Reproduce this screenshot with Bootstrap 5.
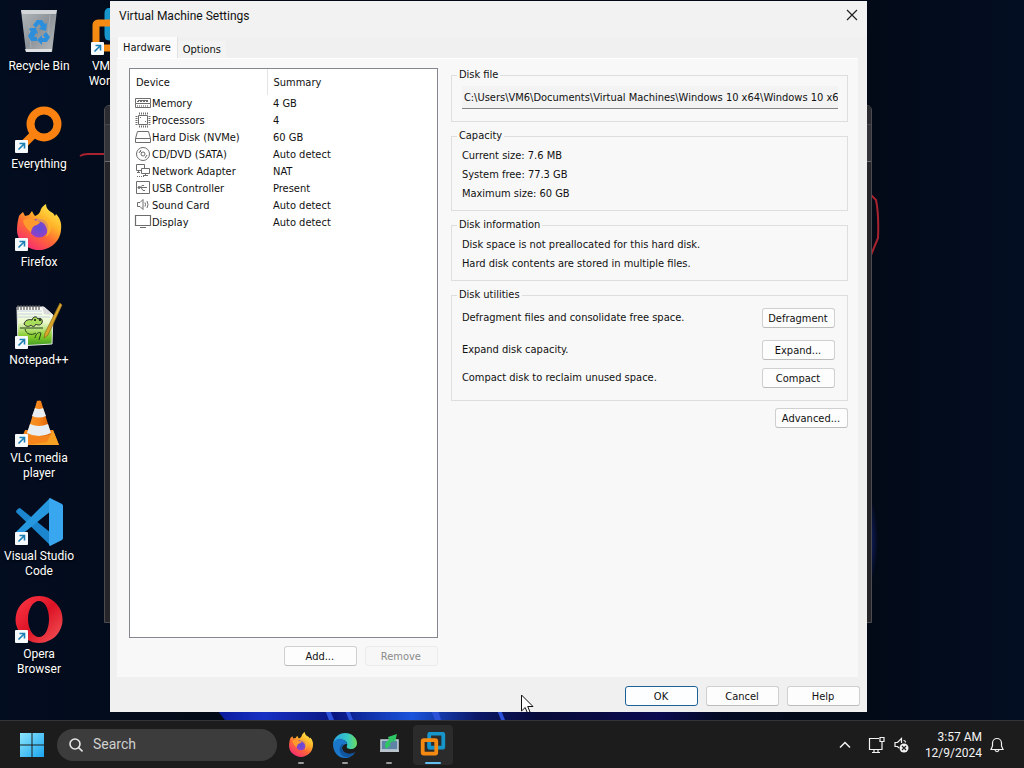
<!DOCTYPE html>
<html lang="en">
<head>
<meta charset="utf-8">
<meta name="viewport" content="width=device-width, initial-scale=1">
<title>Virtual Machine Settings</title>
<link href="https://cdn.jsdelivr.net/npm/bootstrap@5.3.0/dist/css/bootstrap.min.css" rel="stylesheet">
<style>
  :root { --shell: Roboto, "Noto Sans", sans-serif; --dlg: "DejaVu Sans Condensed", "DejaVu Sans", sans-serif; }
  body { font-family: var(--shell); font-size: 12px; line-height: 15px; background: #020a17; color: #fff; }
  button { color: inherit; }

  /* desktop */
  .desktop { background: radial-gradient(ellipse 14px 50px at 864px 540px, #1a2c9c, transparent), linear-gradient(90deg, #030d20, #020a17 20%, #020a17 85%, #030e22); }
  .bloom { left: 20%; right: 20%; bottom: 0; height: 10px; }
  .shortcuts { height: 100%; padding: 0 1px; }
  .shortcut { width: 76px; height: 98px; padding-top: 8px; color: #fff; text-align: center; text-decoration: none; text-shadow: 0 1px 2px #000; }
  .shortcut svg { width: 48px; height: 48px; margin-bottom: 3px; }
  .cutlabel { padding-right: 43px; text-align: right; }
  .redmarks { left: 0; top: 0; width: 100%; height: 100%; pointer-events: none; }
  .backwin { left: 104px; right: 152px; top: 105px; bottom: 97px; background: #26262a; border: 1px solid #4c4c50; border-radius: 5px 5px 0 0; overflow: hidden; }
  .backwin-bar { height: 19px; background: #2b2c31; border-bottom: 1px solid #45464b; }
  .backwin-tools { height: 37px; background: #33343a; border-bottom: 1px solid #6c6d72; }

  /* dialog */
  .dlg { left: 110px; right: 157px; top: 1px; bottom: 8px; background: #f0f0f0; color: #111; font-family: var(--dlg); font-size: 11px; line-height: 14px; }
  .dlg-title { height: 36px; padding: 7px 9px; font-family: var(--shell); font-size: 12px; line-height: 16px; background: #f2f2f2; }
  .dlg-title h1 { font-size: 12px; line-height: 16px; font-weight: 400; }
  .close-x { width: 12px; height: 14px; }
  .tabs { height: 21px; padding-left: 8px; }
  .tabs .nav-link { padding: 0 5px; color: #111; border: 0; border-radius: 0; line-height: 17px; height: 17px; background: #f3f3f3; }
  .tabs .nav-link.active { height: 21px; padding-right: 6px; background: #fbfbfb; border-right: 1px solid #e2e2e2; line-height: 19px; }
  .tabpage { margin: 0 9px 0 7px; padding: 9px 10px 11px 12px; background: #f8f8f8; border-top: 1px solid #fff; }
  .split { display: grid; grid-template-columns: 7fr 9fr; column-gap: 13px; }
  .listbox { background: #fff; border: 1px solid #828790; }
  .devices { width: 100%; table-layout: fixed; }
  .devices th { height: 26px; padding: 1px 0 0 6px; font-weight: 400; vertical-align: middle; }
  .devices th:first-child { width: 137px; border-right: 1px solid #e4e4e4; }
  .devices td { height: 17px; padding: 0 0 0 6px; white-space: nowrap; }
  .devices td:first-child { padding-left: 5px; }
  .devices svg { width: 16px; height: 16px; margin-right: 1px; display: block; stroke: #6d6d6d; fill: none; overflow: visible; }
  .wbtn { width: 73px; height: 20px; padding: 1px 1px 0 0; font-family: var(--dlg); font-size: 11px; line-height: 16px; background: #fdfdfd; color: #111; border: 1px solid #d0d0d0; border-bottom-color: #bcbcbc; border-radius: 3px; }
  .wbtn:disabled { background: #f7f7f7; color: #8b8b8b; border-color: #ebebeb; opacity: 1; }
  .wbtn.default { border-color: #1c6299; background: #fcfeff; }
  .groups { gap: 7px; }
  .group { border: 1px solid #dedede; padding: 3px 12px 7px 10px; min-width: 0; }
  .group legend { float: none; width: auto; margin: 0 0 0 -5px; padding: 0 2px; font-size: 11px; line-height: 14px; }
  .group p { margin: 0; line-height: 19px; }
  .group-file { padding-top: 4px; padding-bottom: 12px; padding-right: 9px; }
  .group-util { padding-top: 6px; padding-bottom: 12px; }
  .pathbox { width: 100%; height: 23px; padding: 0 0 0 2px; border: 0; border-bottom: 1px solid #868686; border-radius: 0; background: #f3f3f3; color: #111; font: 11px var(--dlg); outline: 0; }
  .dlg-foot { height: 35px; padding: 9px 7px 6px; gap: 8px; }
  .pointer { left: 410px; bottom: -2px; width: 14px; height: 20px; }

  /* taskbar */
  .taskbar { height: 48px; background: #1c1c1c; border-top: 1px solid #333338; padding: 0 20px 0 9px; }
  .tb { height: 40px; width: 40px; margin: 0 2px; padding: 0; border: 0; background: none; position: relative; border-radius: 4px; }
  .tb svg { width: 26px; height: 26px; }
  .tb::after { content: ""; position: absolute; left: 17px; bottom: 1px; width: 6px; height: 2px; border-radius: 1px; background: #9a9a9a; }
  .tb.on { background: #2b2b2b; }
  .tb.on::after { left: 12px; width: 16px; background: #62bdf0; }
  .startbtn { width: 46px; padding: 0; border: 0; background: none; }
  .searchpill { width: 220px; height: 32px; margin: 0 2px; padding: 0 12px; border-radius: 16px; background: #3c3c3c; gap: 10px; }
  .searchpill input { width: 100%; border: 0; background: none; color: #fff; outline: 0; padding: 0; font-size: 14px; }
  .searchpill input::placeholder { color: #d0d0d0; opacity: 1; }
  .tray { border: 0; background: none; padding: 0; }
  .tray svg { display: block; fill: none; stroke: #f2f2f2; }
  .clock { line-height: 16px; text-align: right; color: #f4f4f4; }
</style>
</head>
<body class="vh-100 d-flex flex-column overflow-hidden">

<svg width="0" height="0" class="position-absolute" aria-hidden="true">
  <defs>
    <linearGradient id="bin" x1="0" y1="0" x2="1" y2="1"><stop offset="0" stop-color="#b4b9bd"/><stop offset=".5" stop-color="#8d9499"/><stop offset="1" stop-color="#b9bdc0"/></linearGradient>
    <linearGradient id="fx" x1=".85" y1="0" x2=".2" y2="1"><stop offset="0" stop-color="#fff050"/><stop offset=".35" stop-color="#ffb429"/><stop offset=".6" stop-color="#ff6b35"/><stop offset="1" stop-color="#f5227a"/></linearGradient>
    <radialGradient id="fxp"><stop offset="0" stop-color="#5a4fd6"/><stop offset="1" stop-color="#9440c8"/></radialGradient>
    <linearGradient id="np" x1="0" y1="0" x2="0" y2="1"><stop offset="0" stop-color="#fff"/><stop offset=".4" stop-color="#e9f7c8"/><stop offset=".75" stop-color="#85cc2b"/><stop offset="1" stop-color="#3c9a24"/></linearGradient>
    <linearGradient id="cone" x1="0" y1="0" x2="1" y2="0"><stop offset="0" stop-color="#f39a2e"/><stop offset=".5" stop-color="#f7861b"/><stop offset="1" stop-color="#d95f05"/></linearGradient>
    <linearGradient id="op" x1="0" y1="0" x2="1" y2="1"><stop offset="0" stop-color="#ff3a48"/><stop offset=".5" stop-color="#dd1325"/><stop offset="1" stop-color="#f5585c"/></linearGradient>
    <linearGradient id="edge" x1="0" y1="0" x2="1" y2="0"><stop offset="0" stop-color="#2aa3e0"/><stop offset=".6" stop-color="#36c8c6"/><stop offset="1" stop-color="#6bdc5c"/></linearGradient>
    <linearGradient id="win" x1="0" y1="0" x2="1" y2="1"><stop offset="0" stop-color="#8be6fd"/><stop offset="1" stop-color="#1ba4ee"/></linearGradient>
    <linearGradient id="strip" x1="0" y1="0" x2="1" y2="0"><stop offset="0" stop-color="#0a1a9a"/><stop offset=".08" stop-color="#1730c4"/><stop offset=".2" stop-color="#0a1680"/><stop offset=".33" stop-color="#1a54dc"/><stop offset=".44" stop-color="#0c1868"/><stop offset=".55" stop-color="#060a38"/><stop offset=".75" stop-color="#0a0a50"/><stop offset=".85" stop-color="#020a24"/><stop offset="1" stop-color="#020a17"/></linearGradient>
    <g id="arrowbox"><rect x="0" y="34" width="13" height="13" rx="1" fill="#f6fafd"/><path d="M3.500 43.500 9 38M4.500 37.500h5v5" fill="none" stroke="#1b7fb4" stroke-width="1.600"/></g>
    <g id="fox">
      <path d="M4 12c1-2 3-3 4-4l2 4 4-1 3-4c1 2 2 4 3 5 3-1 5-3 6-7 1-2 3-4 5-5 0 4 2 6 5 8 3 1 3 3 4 4l1-2c4 4 6 9 5 16-1 12-11 20-22 20S2 38 2 26c0-6 1-10 2-14z" fill="url(#fx)"/>
      <circle cx="24" cy="24" r="9.500" fill="url(#fxp)"/>
      <path d="M8 17c3-3 8-3 11-1 2 1 5 1 6 2-1 3-5 3-7 5-1 2-2 3-2 6-3-4-7-7-8-12z" fill="#ff9a2c"/>
      <path d="M24 12c5-1 10 2 12 7 1 6-1 11-5 14 2-5 1-9-1-12s-5-4-9-4z" fill="#ffb52e" opacity=".75"/>
    </g>
    <g id="vmw" fill="none" stroke-linejoin="round">
      <rect x="17" y="3" width="26" height="26" rx="2" stroke="#1696cb" stroke-width="7"/>
      <rect x="5" y="15" width="25" height="25" rx="2" stroke="#f58a13" stroke-width="7"/>
      <path d="M17 20v9h9" stroke="#1696cb" stroke-width="6"/>
    </g>
  </defs>
</svg>

<main class="desktop position-relative flex-grow-1 overflow-hidden">
  <svg class="bloom position-absolute" viewBox="0 0 614 10" preserveAspectRatio="none" aria-hidden="true">
    <path d="M12 0h590v10H20z" fill="url(#strip)"/>
    <path d="M120 0l4 10h5L125 0zM140 0l4 10h4l-4-10zM226 0l4 10h6l-3-10zM292 0l4 10h4l-4-10z" fill="#2c50d8"/>
  </svg>
  <svg class="redmarks position-absolute" aria-hidden="true" fill="none" stroke="#a8232f" stroke-width="2"><path d="M80 156q3-2 8-2h18M871 195l5 5q3 14 2 38l-7 17"/></svg>

  <nav class="shortcuts d-flex flex-column flex-wrap align-content-start" aria-label="Desktop">
    <a href="#" class="shortcut"><svg viewBox="0 0 48 48">
      <path d="M6 2h36l-5 42H11z" fill="url(#bin)"/><path d="M6 2h36l-1 4H7z" fill="#d3d6d8"/><path d="M10 41h27l-1 3H11z" fill="#dfe1e2"/><path d="M13 7l3 33M35 7l-3 33" stroke="#a6acb0"/>
      <g fill="#2d8fdc"><path d="M18 17l4-5h5l3 4 2-1-1 8-7-2 2-2-2-3-3 4z"/><path d="M31 24l4 5-3 5h-5v3l-5-5 5-5v3h3l-2-3z"/><path d="M15 20l6 0 2 6-2-1-2 4h3v4h-6l-3-5 3-5-2-1z"/></g></svg><span class="d-block">Recycle Bin</span></a>
    <a href="#" class="shortcut"><svg viewBox="0 0 48 48"><circle cx="29" cy="18" r="13.500" fill="none" stroke="#fb8211" stroke-width="8"/><path d="M20 27 7 40" stroke="#fb8211" stroke-width="8"/><use href="#arrowbox"/></svg><span class="d-block">Everything</span></a>
    <a href="#" class="shortcut"><svg viewBox="0 0 48 48"><use href="#fox"/><use href="#arrowbox"/></svg><span class="d-block">Firefox</span></a>
    <a href="#" class="shortcut"><svg viewBox="0 0 48 48">
      <path d="M2 5h27l9 8-1 29L3 44z" fill="url(#np)" stroke="#e6e6e6"/><path d="M27 4l2 8 8 1z" fill="#d7d9da"/>
      <path d="M3 9h24M3 12h24M3 15h32" stroke="#b9c6e0" stroke-width=".8"/><path d="M3 3v5M6 3v5M9 3v5M12 3v5M15 3v5M18 3v5M21 3v5M24 3v5" stroke="#555" stroke-width="1.200"/>
      <path d="M9 22c1-4 5-5 8-4 1-4 5-4 6-1 3-2 5 1 4 4-2 3-5 2-6 1-1 3-4 3-5 1-2 2-5 2-7-1z" fill="#a9dd5c" stroke="#222"/><circle cx="20" cy="18" r="1" fill="#111"/><circle cx="25" cy="18" r="1" fill="#111"/>
      <path d="M5 26h23M10 27c1 5 6 7 11 4M20 36c1-5 4-6 6-5l-2 7" fill="none" stroke="#23401a"/>
      <path d="M45 1l2 2-14 30-4 3 1-5z" fill="#d9a52b" stroke="#8d6a1a" stroke-width=".7"/><use href="#arrowbox"/></svg><span class="d-block">Notepad++</span></a>
    <a href="#" class="shortcut"><svg viewBox="0 0 48 48">
      <path d="M10 30h28l6 15H4z" fill="#f5851c"/><path d="M38 30l6 15H12l20-3z" fill="#f6a024"/>
      <path d="M22 1q2-1 4 0l10 33q-12 6-24 0z" fill="url(#cone)"/><path d="M20 8q4 2 8 0l3 8q-7 3-14 0zM15 24q9 4 18 0l3 9q-12 6-24 0z" fill="#e9eef2"/><use href="#arrowbox"/></svg><span class="d-block">VLC media player</span></a>
    <a href="#" class="shortcut"><svg viewBox="0 0 48 48">
      <path d="M5 10q-2 0-4 3 0 2 2 3l32 31 1-12z" fill="#1b86cd"/><path d="M5 38q-2-1-4-3 0-2 2-3L35 0l2 12z" fill="#2598e0"/><path d="M35 0l12 6q1 1 1 2v32q0 1-1 2l-12 6q-1 0-1-2V2q0-2 1-2z" fill="#39a7ef"/><use href="#arrowbox"/></svg><span class="d-block">Visual Studio Code</span></a>
    <a href="#" class="shortcut"><svg viewBox="0 0 48 48"><path fill-rule="evenodd" d="M24 0a23.500 23.500 0 1 0 .1 0zM24 5c6 0 10 8 10 18s-4 18-10 18-11-8-11-18S18 5 24 5z" fill="url(#op)"/><use href="#arrowbox"/></svg><span class="d-block">Opera Browser</span></a>
    <a href="#" class="shortcut"><svg viewBox="0 0 48 48"><use href="#vmw"/><use href="#arrowbox"/></svg><span class="cutlabel d-block">VM<br>Wor</span></a>
  </nav>

  <div class="backwin position-absolute"><div class="backwin-bar"></div><div class="backwin-tools"></div></div>

  <section class="dlg position-absolute d-flex flex-column overflow-hidden" role="dialog" aria-labelledby="dlgname">
    <header class="dlg-title d-flex justify-content-between">
      <h1 id="dlgname" class="m-0">Virtual Machine Settings</h1>
      <button type="button" class="close-x border-0 bg-transparent p-0 d-flex" aria-label="Close"><svg width="12" height="14" viewBox="0 0 12 14" stroke="#222" stroke-width="1.200"><path d="M1 2l10 10M11 2L1 12"/></svg></button>
    </header>
    <ul class="tabs nav align-items-end">
      <li class="nav-item"><button type="button" class="nav-link active">Hardware</button></li>
      <li class="nav-item"><button type="button" class="nav-link">Options</button></li>
    </ul>
    <div class="tabpage split flex-grow-1">
      <div class="d-flex flex-column">
        <div class="listbox flex-grow-1">
          <table class="devices">
            <thead><tr><th>Device</th><th>Summary</th></tr></thead>
            <tbody>
              <tr><td><div class="d-flex align-items-center"><svg viewBox="0 1 16 16"><path d="M.5 3.500h15v5h-15zM.5 8.500v4h15v-4M3 5.500h10"/><path d="M2 6.500h12" stroke-dasharray="2 1"/><path d="M2 11h12" stroke-width="2" stroke-dasharray="1 1" opacity=".6"/></svg>Memory</div></td><td>4 GB</td></tr>
              <tr><td><div class="d-flex align-items-center"><svg viewBox="0 1 16 16"><path d="M3.500 3.500h9v9h-9z"/><path d="M4 1.500h9M4 14.500h9" stroke-width="2" stroke-dasharray="1 1"/><path d="M1.500 4v9M14.500 4v9" stroke-width="2" stroke-dasharray="1 1"/><path d="M5 5.500h1M10 9.500h1"/></svg>Processors</div></td><td>4</td></tr>
              <tr><td><div class="d-flex align-items-center"><svg viewBox="0 1 16 16"><path d="M2.500 2.500h11l2 7v4H.5v-4zM.5 9.500h15"/></svg>Hard Disk (NVMe)</div></td><td>60 GB</td></tr>
              <tr><td><div class="d-flex align-items-center"><svg viewBox="0 1 16 16"><circle cx="8" cy="8" r="6.500"/><circle cx="8" cy="8" r="2"/><path d="M4 7l2-3M10 12l2-3M5 5l2 2"/></svg>CD/DVD (SATA)</div></td><td>Auto detect</td></tr>
              <tr><td><div class="d-flex align-items-center"><svg viewBox="0 1 16 16"><path d="M1.500 1.500h8v6h-8z"/><path d="M6.500 5.500h8v5h-8z" fill="#fff"/><path d="M8 12.500h5M10.500 10.500v2M3.500 7.500v2M2 9.500h3"/><path d="M2 13.500h8" stroke-dasharray="1 1"/></svg>Network Adapter</div></td><td>NAT</td></tr>
              <tr><td><div class="d-flex align-items-center"><svg viewBox="0 1 16 16"><path d="M1.500 1.500h13v12h-13zM3 7.500h9M5 7.500l2-2h2M6 7.500l2 3h2"/><circle cx="4" cy="7.500" r="1" fill="#777"/></svg>USB Controller</div></td><td>Present</td></tr>
              <tr><td><div class="d-flex align-items-center"><svg viewBox="0 1 16 16"><path d="M2.500 5.500H5l3-3v10l-3-3H2.500zM10 5.500q1 2 0 4M12 4q2 3.500 0 7"/></svg>Sound Card</div></td><td>Auto detect</td></tr>
              <tr><td><div class="d-flex align-items-center"><svg viewBox="0 1 16 16"><path d="M.5 1.500h15v10H.5zM5 13.500h6" stroke-width="1.200"/></svg>Display</div></td><td>Auto detect</td></tr>
            </tbody>
          </table>
        </div>
        <div class="d-flex justify-content-end gap-2 mt-2">
          <button type="button" class="wbtn">Add...</button>
          <button type="button" class="wbtn" disabled>Remove</button>
        </div>
      </div>
      <div class="groups d-flex flex-column">
        <fieldset class="group group-file">
          <legend>Disk file</legend>
          <input class="pathbox d-block" type="text" readonly aria-label="Disk file" value="C:\Users\VM6\Documents\Virtual Machines\Windows 10 x64\Windows 10 x6">
        </fieldset>
        <fieldset class="group">
          <legend>Capacity</legend>
          <p>Current size: 7.6 MB</p><p>System free: 77.3 GB</p><p>Maximum size: 60 GB</p>
        </fieldset>
        <fieldset class="group">
          <legend>Disk information</legend>
          <p>Disk space is not preallocated for this hard disk.</p><p>Hard disk contents are stored in multiple files.</p>
        </fieldset>
        <fieldset class="group group-util">
          <legend>Disk utilities</legend>
          <div class="d-flex justify-content-between align-items-center"><span>Defragment files and consolidate free space.</span><button type="button" class="wbtn">Defragment</button></div>
          <div class="d-flex justify-content-between align-items-center mt-2 pt-1"><span>Expand disk capacity.</span><button type="button" class="wbtn">Expand...</button></div>
          <div class="d-flex justify-content-between align-items-center mt-2"><span>Compact disk to reclaim unused space.</span><button type="button" class="wbtn">Compact</button></div>
        </fieldset>
        <div class="d-flex justify-content-end"><button type="button" class="wbtn">Advanced...</button></div>
      </div>
    </div>
    <footer class="dlg-foot d-flex justify-content-end">
      <button type="button" class="wbtn default">OK</button>
      <button type="button" class="wbtn">Cancel</button>
      <button type="button" class="wbtn">Help</button>
    </footer>
    <svg class="pointer position-absolute" viewBox="0 0 14 20" aria-hidden="true"><path d="M1.500 1v16l3.700-3.500L7.500 19l2.500-1-2.300-5.500H13z" fill="#fff" stroke="#111"/></svg>
  </section>
</main>

<footer class="taskbar d-flex align-items-center flex-shrink-0">
  <button type="button" class="startbtn" aria-label="Start"><svg width="24" height="24" viewBox="0 0 24 24"><path d="M0 0h11.500v11.500H0zM12.500 0H24v11.500H12.500zM0 12.500h11.500V24H0zM12.500 12.500H24V24H12.500z" fill="url(#win)"/></svg></button>
  <label class="searchpill d-flex align-items-center">
    <svg width="14" height="16" viewBox="0 0 14 16" fill="none" stroke="#e8e8e8" stroke-width="1.600" class="flex-shrink-0"><circle cx="6" cy="7" r="5"/><path d="M9.500 10.500l4 4"/></svg>
    <input type="search" placeholder="Search" aria-label="Search">
  </label>
  <div class="d-flex flex-grow-1">
    <button type="button" class="tb" aria-label="Firefox"><svg viewBox="0 0 48 48"><use href="#fox"/></svg></button>
    <button type="button" class="tb" aria-label="Edge"><svg viewBox="0 0 26 26">
      <path d="M1 12C2 5 7 1 13 1c7 0 12 5 12 10 0 4-3 6-6 6-3 0-5-1-4-3 1-3-1-6-5-6-4 0-7 2-9 4z" fill="url(#edge)"/>
      <path d="M1 12c1-4 5-6 9-5 3 1 5 3 5 5-3 0-5 2-5 4 0 4 4 7 8 6 2 0 4-1 5-2-2 4-6 6-10 6C6 26 1 20 1 12z" fill="#1a77c9"/>
      <path d="M10 12c-4 4-3 11 3 13 4 1 8-1 10-5-4 3-12 2-13-4-.4-2 0-3 2-4z" fill="#12559f"/></svg></button>
    <button type="button" class="tb" aria-label="Screen capture"><svg viewBox="0 0 26 26"><path d="M5 8h17v10H5z" fill="#5f83a6" stroke="#c8d2da" stroke-width="1.500"/><path d="M4 18h19v2H4z" fill="#b9c4cc"/><path d="M10 17c-2-5 0-8 3-9l-1-3 9-3-2 8-2-1-4 3 2 1z" fill="#2fc766"/></svg></button>
    <button type="button" class="tb on" aria-label="VMware Workstation"><svg viewBox="0 0 48 48"><use href="#vmw"/></svg></button>
  </div>
  <div class="d-flex align-items-center">
    <button type="button" class="tray me-3" aria-label="Show hidden icons"><svg width="14" height="10" viewBox="0 0 14 10" stroke-width="1.500"><path d="M2 7.500l5-5 5 5"/></svg></button>
    <button type="button" class="tray" aria-label="Network"><svg width="18" height="18" viewBox="0 0 18 18" stroke-width="1.200"><path d="M11 2.500H1.500v11H14V9M6 13.500v3M10 13.500v3M4 16.500h8M12 1.500h4v4h-4zM14 5.500V9"/></svg></button>
    <button type="button" class="tray ms-2 me-3" aria-label="Volume muted"><svg width="15" height="18" viewBox="0 0 15 18" stroke-width="1.200"><path d="M5 12L3.500 10.500H1v-4h2.500l4-4V7M9.500 4.500q2 0 2 2"/><circle cx="10" cy="12" r="4.500" fill="#f2f2f2" stroke="none"/><path d="M8 10l4 4M12 10l-4 4" stroke="#222"/></svg></button>
    <button type="button" class="tray clock"><span class="d-block">3:57 AM</span><span class="d-block">12/9/2024</span></button>
    <button type="button" class="tray ms-2" aria-label="Notifications"><svg width="14" height="16" viewBox="0 0 14 16" stroke-width="1.200"><path d="M1 12.500h12L11.500 9V6a4.500 4.500 0 0 0-9 0v3zM5 13q2 3.500 4 0"/></svg></button>
  </div>
</footer>

<script src="https://cdn.jsdelivr.net/npm/bootstrap@5.3.0/dist/js/bootstrap.bundle.min.js"></script>
</body>
</html>
